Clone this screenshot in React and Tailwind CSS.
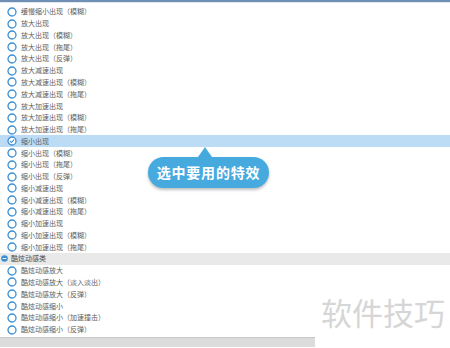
const items = [
  '缓慢缩小出现（模糊）',
  '放大出现',
  '放大出现（模糊）',
  '放大出现（拖尾）',
  '放大出现（反弹）',
  '放大减速出现',
  '放大减速出现（模糊）',
  '放大减速出现（拖尾）',
  '放大加速出现',
  '放大加速出现（模糊）',
  '放大加速出现（拖尾）',
  '缩小出现',
  '缩小出现（模糊）',
  '缩小出现（拖尾）',
  '缩小出现（反弹）',
  '缩小减速出现',
  '缩小减速出现（模糊）',
  '缩小减速出现（拖尾）',
  '缩小加速出现',
  '缩小加速出现（模糊）',
  '缩小加速出现（拖尾）',
]

const cool = [
  '酷炫动感放大',
  '酷炫动感放大（淡入淡出）',
  '酷炫动感放大（反弹）',
  '酷炫动感缩小',
  '酷炫动感缩小（加速撞击）',
  '酷炫动感缩小（反弹）',
]

function Radio({ checked }) {
  return (
    <svg width="10" height="10" viewBox="0 0 10 10" className="shrink-0">
      <circle cx="5" cy="5" r="4" fill="white" stroke="#3d8fd4" strokeWidth="1.3" />
      {checked && <path d="M3 5.1 L4.5 6.5 L7 3.6" fill="none" stroke="#3d8fd4" strokeWidth="1.1" />}
    </svg>
  )
}

function Row({ label, selected }) {
  return (
    <div className={`h-[11.78px] flex items-center gap-[4px] pl-[7px] ${selected ? 'bg-[#bcdcf6]' : ''}`}>
      <Radio checked={selected} />
      <span className="text-[7px] leading-none text-[#606060]">{label}</span>
    </div>
  )
}

export default function App() {
  return (
    <div
      className="relative w-[450px] h-[348px] overflow-hidden bg-white"
      style={{ fontFamily: '"Noto Sans CJK SC", "Noto Sans", sans-serif' }}
    >
      <div className="h-[3px] bg-[#dfe8f2] border-t-2 border-[#6f8fb5]" />
      <div className="pt-[3px]">
        {items.map((t) => (
          <Row key={t} label={t} selected={t === '缩小出现'} />
        ))}
        <div className="h-[11.78px] flex items-center gap-[3px] pl-[1px] bg-[#e9e9e9]">
          <svg width="7" height="7" viewBox="0 0 7 7" className="shrink-0">
            <circle cx="3.5" cy="3.5" r="3.3" fill="#3d8fd4" />
            <path d="M1.6 3.5 H5.4" stroke="white" strokeWidth="1" />
          </svg>
          <span className="text-[7px] leading-none text-[#4a4a4a]">酷炫动感类</span>
        </div>
        {cool.map((t) => (
          <Row key={t} label={t} />
        ))}
      </div>
      <div className="mt-[2px] w-[315px] h-[10px] bg-[#dcdcdc] border-t border-[#c9c9c9]" />

      <div className="absolute left-[148px] top-[147px] flex flex-col items-center">
        <div className="ml-[-8px] w-0 h-0 border-l-[7px] border-r-[7px] border-b-[10px] border-l-transparent border-r-transparent border-b-[#46aadf]" />
        <div className="w-[121px] h-[31px] rounded-[16px] bg-[#46aadf] shadow-[0_2px_3px_rgba(0,0,0,0.25)] flex items-center justify-center">
          <span className="text-[14px] font-bold text-white tracking-[0.8px]">选中要用的特效</span>
        </div>
      </div>

      <div className="absolute left-[321px] top-[296px] text-[31px] leading-none text-[#d6d6d6]">
        软件技巧
      </div>
    </div>
  )
}
